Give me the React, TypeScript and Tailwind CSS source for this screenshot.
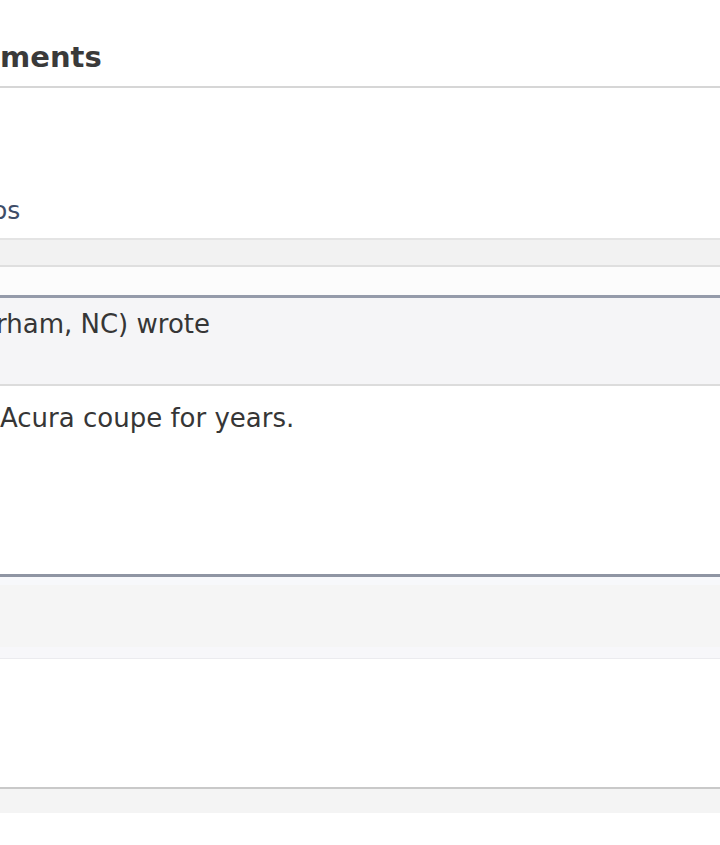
import React from "react";

const font = { fontFamily: '"DejaVu Sans", Verdana, sans-serif' };

export default function App() {
  return (
    <div className="w-[720px] h-[845px] overflow-hidden bg-white flex flex-col" style={font}>
      {/* Heading */}
      <div className="h-[86px] flex items-end pb-[14px]">
        <h2 className="text-[29px] leading-none font-bold text-[#3a3a3a]">ments</h2>
      </div>
      <div className="h-[2px] bg-[#d6d6d6]" />
      {/* Photos link row */}
      <div className="h-[150px] flex items-end pb-[15px]">
        <span className="text-[25px] leading-none text-[#3f4d68] ml-[-8px]">os</span>
      </div>
      <div className="h-[2px] bg-[#e4e4e4]" />
      <div className="h-[25px] bg-[#f2f2f2]" />
      <div className="h-[2px] bg-[#dfdfdf]" />
      <div className="h-[28px] bg-[#fcfcfc]" />
      {/* Comment box */}
      <div className="h-[3px] bg-[#959baa]" />
      <div className="h-[86px] bg-[#f5f5f7] pt-[13px]">
        <span className="text-[26px] leading-none text-[#363636] ml-[-4px] block">rham, NC) wrote</span>
      </div>
      <div className="h-[2px] bg-[#dcdcdc]" />
      <div className="h-[188px] bg-white pt-[19px]">
        <span className="text-[26px] leading-none text-[#363636] block">Acura coupe for years.</span>
      </div>
      <div className="h-[3px] bg-[#8f95a3]" />
      <div className="h-[70px] bg-[#f5f5f5] border-t-[8px] border-[#f7f8fb]" />
      <div className="h-[12px] bg-[#f7f7fa] border-b border-[#ebebef]" />
      <div className="h-[128px] bg-white" />
      <div className="h-[2px] bg-[#c9c9c9]" />
      <div className="h-[24px] bg-[#f4f4f4]" />
      <div className="flex-1 bg-white" />
    </div>
  );
}
